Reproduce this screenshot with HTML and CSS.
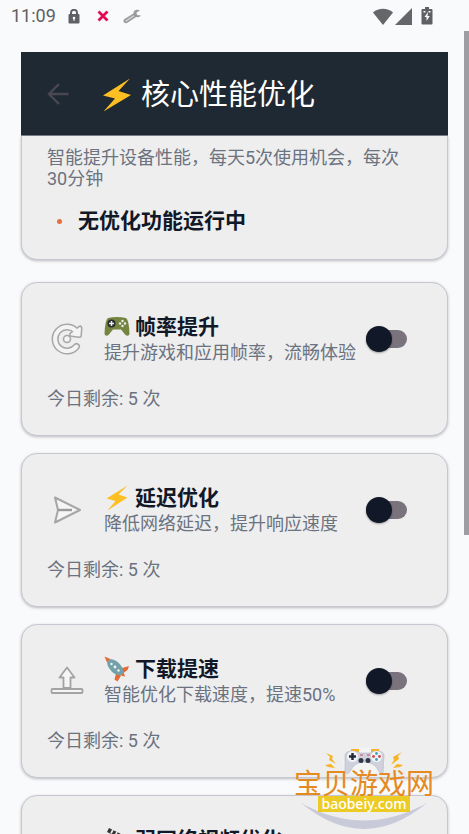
FILE: index.html
```html
<!DOCTYPE html>
<html lang="zh-CN">
<head>
<meta charset="utf-8">
<meta name="viewport" content="width=device-width, initial-scale=1">
<title>核心性能优化</title>
<link rel="stylesheet" href="styles.css">
</head>
<body>
<svg class="defs" aria-hidden="true">
  <symbol id="bolt" viewBox="0 0 28 34"><path d="M27 .5 0 17.500l12 3L.5 33.500 28 17l-12.500-4z" fill="#fdbf22"/></symbol>
</svg>
<div class="screen">
  <div class="status-bar">
    <time class="clock">11:09</time>
    <svg class="status-lock" width="12" height="15" viewBox="0 0 12 15"><path d="M3 6V3.800a3 3 0 0 1 6 0V6" fill="none" stroke="#5f6063" stroke-width="2"/><rect x=".5" y="5" width="11" height="9.500" rx="1" fill="#5f6063"/><circle cx="6" cy="9" r="1.300" fill="#f9fafc"/><path d="M6 9v3" stroke="#f9fafc"/></svg>
    <svg class="status-x" width="12" height="12" viewBox="0 0 12 12"><path d="m1.500 1.500 9 9M10.500 1.500l-9 9" stroke="#e00b50" stroke-width="2.800"/></svg>
    <svg class="status-tool" width="19" height="15" viewBox="0 0 19 15"><path d="m2.800 12 8-5.200" stroke="#9b9b9b" stroke-width="4.500" stroke-linecap="round"/><path d="M17 1.500c-3-1.500-7-.5-6.500 4C12 9 16 9 18 6.500l-4-.5-.5-2.500z" fill="#9b9b9b"/><path d="m3 12 7.500-5" stroke="#d9d9da" stroke-width="1.300" stroke-linecap="round"/></svg>
    <span class="signals">
      <svg width="20" height="17" viewBox="0 0 20 17"><path d="M0 4.500C5.500-.5 14.500-.5 20 4.500L10 17z" fill="#656669"/></svg>
      <svg width="17" height="17" viewBox="0 0 17 17"><path d="M17 0v17H0z" fill="#656669"/></svg>
      <svg class="battery" width="12" height="18" viewBox="0 0 12 18"><path d="M4 0h4v2h2.500Q11.500 2 11.500 3v13.500q0 1-1 1h-9q-1 0-1-1V3q0-1 1-1H4z" fill="#5f6063"/><path d="M2.500 4h2v1.500h-2zM7.500 4h2v1.500h-2zM7 5 3.500 10h2v4L8.800 9H6.500z" fill="#f9fafc"/></svg>
    </span>
  </div>

  <header class="app-header">
    <button class="back" type="button" aria-label="返回"><svg width="22" height="22" viewBox="0 0 22 22"><path d="M21.500 11H2M12 1 2 11l10 10" fill="none" stroke="#494852" stroke-width="2.400"/></svg></button>
    <svg class="header-bolt" width="28" height="34"><use href="#bolt"/></svg>
    <h1>核心性能优化</h1>
  </header>

  <main>
    <section class="card summary">
      <p class="note">智能提升设备性能，每天5次使用机会，每次30分钟</p>
      <p class="state"><span class="dot"></span>无优化功能运行中</p>
    </section>

    <div class="features">
      <section class="card">
        <div class="row">
          <svg class="feature-icon" width="40" height="40" viewBox="0 0 40 40"><g fill="none" stroke="#a6a6a6" stroke-width="7"><path d="M28.500 11.500A12 12 0 1 0 29.500 27.500" stroke-linecap="round"/><path d="m33 9-.5 7.500-8-1z" stroke-width="5" stroke-linejoin="round"/></g><g fill="#f4f4f4" stroke="#f4f4f4"><path d="M28.500 11.500A12 12 0 1 0 29.500 27.500" fill="none" stroke-width="4" stroke-linecap="round"/><path d="m33 9-.5 7.500-8-1z" stroke-width="2" stroke-linejoin="round"/></g><circle cx="20" cy="20" r="3.500" fill="#f4f4f4" stroke="#a6a6a6" stroke-width="1.600"/></svg>
          <div class="text">
            <h2><svg class="emoji" width="26" height="26" viewBox="0 0 26 26"><path d="M4 4q9-2 18 0Q25 6 25.500 20q-1 3-4 1L17 15.500H9L4.500 21q-3 2-4-1Q1 6 4 4z" fill="#75843f"/><circle cx="7.500" cy="9.500" r="4" fill="#272b2d"/><path d="M7.500 7v5M5 9.500h5" stroke="#eee" stroke-width="1.500"/><g fill="#eee"><circle cx="18.500" cy="7" r="1.200"/><circle cx="18.500" cy="12" r="1.200"/><circle cx="16" cy="9.500" r="1.200"/><circle cx="21" cy="9.500" r="1.200"/></g></svg><label for="fps">帧率提升</label></h2>
            <p>提升游戏和应用帧率，流畅体验</p>
          </div>
          <input class="switch" id="fps" type="checkbox" role="switch">
        </div>
        <p class="left">今日剩余: 5 次</p>
      </section>

      <section class="card">
        <div class="row">
          <svg class="feature-icon" width="40" height="40" viewBox="0 0 40 40"><path d="m8 7.500 25 12.500-25 12.500 3-12.500z" fill="#f5f5f5" stroke="#a6a6a6" stroke-width="2" stroke-linejoin="round"/><path d="M11 20h14" stroke="#999" stroke-width="2.400"/></svg>
          <div class="text">
            <h2><svg class="emoji" width="26" height="26" viewBox="0 0 26 26"><path d="M23.500.5 2.500 13.500l9 2.500-8 9.500 20-13-9-3z" fill="#fdbf22"/></svg><label for="latency">延迟优化</label></h2>
            <p>降低网络延迟，提升响应速度</p>
          </div>
          <input class="switch" id="latency" type="checkbox" role="switch">
        </div>
        <p class="left">今日剩余: 5 次</p>
      </section>

      <section class="card">
        <div class="row">
          <svg class="feature-icon" width="40" height="40" viewBox="0 0 40 40"><g fill="#f5f5f5" stroke="#a3a3a3" stroke-width="1.800" stroke-linejoin="round"><path d="m20 6.500 7.500 10H23.500V27h-7V16.500H12.500z"/><rect x="4.500" y="28" width="31" height="4" rx="1"/></g></svg>
          <div class="text">
            <h2><svg class="emoji" width="26" height="26" viewBox="0 0 26 26"><path d="M.5.500 6.500 3 3 6.500zM16.500 12.500l8.500-2.500-1.500 4-4 3zM12 17.500 10.500 23.500l3 2 4-6.500zM16 19.500l3.500-3.500 1.500 4.500z" fill="#e66a35"/><path d="M3 6.500 6.500 3C13 4 19 9.500 19.500 16.500L16.500 19.500C9.500 19 4 13 3 6.500z" fill="#73a1aa"/><g fill="#f0f3f3"><circle cx="7.500" cy="8" r="1.200"/><circle cx="11" cy="11" r="1.400"/><circle cx="14.500" cy="14.500" r="1.200"/></g></svg><label for="download">下载提速</label></h2>
            <p>智能优化下载速度，提速50%</p>
          </div>
          <input class="switch" id="download" type="checkbox" role="switch">
        </div>
        <p class="left">今日剩余: 5 次</p>
      </section>

      <section class="card">
        <div class="row">
          <svg class="feature-icon" width="40" height="40" viewBox="0 0 40 40"><path d="M11 9v24l21-12z" fill="#f5f5f5" stroke="#a6a6a6" stroke-width="1.500"/></svg>
          <div class="text">
            <h2><svg class="emoji" width="26" height="26" viewBox="0 0 26 26"><path d="m5 1 16 8-1.500 4L3 5z" fill="#303234"/><path d="m9 2.500-2 4m6-1.500-2 4m6-2-2 4" stroke="#e9e9e9" stroke-width="1.700"/><path d="M2 11h21v14H2z" fill="#303234"/></svg><label for="video">弱网络视频优化</label></h2>
            <p>智能缓冲，流畅播放视频</p>
          </div>
          <input class="switch" id="video" type="checkbox" role="switch">
        </div>
        <p class="left">今日剩余: 5 次</p>
      </section>
    </div>
  </main>

  <div class="scrollbar"></div>

  <aside class="watermark">
    <svg class="pad" width="78" height="28" viewBox="0 0 78 28"><ellipse cx="39" cy="14" rx="21" ry="14" fill="#f4f4f4"/><g fill="#f6b425"><path d="m1 5 7 3-1 3 4 5-7-4 1-3zM0 17l6-1 4 4-7-1zM77 4l-9 5 1 3-3 5 8-6-1-3zM78 17l-6-1-4 4 7-1z"/><path d="M26 1h8v3h-8zM46 1h8v3h-8z"/></g><path d="M20 7q1-4 8-4 5 0 7 2h10q2-2 7-2 6 0 7 4l-1 18q-2 2-5-3-4-8-14-8-9 0-13 8-3 5-6 3z" fill="#d0d1dc" stroke="#b4b6c6" stroke-width=".6"/><circle cx="27.500" cy="8.500" r="5.500" fill="#f2f3f7"/><circle cx="51.500" cy="8.500" r="5.500" fill="#f2f3f7"/><path d="M27.500 5v7M24 8.500h7" stroke="#232b3b" stroke-width="2.500"/><circle cx="51.500" cy="5.500" r="1.400" fill="#39a7b7"/><circle cx="51.500" cy="11.500" r="1.400" fill="#39a7b7"/><circle cx="48.500" cy="8.500" r="1.400" fill="#d64452"/><circle cx="54.500" cy="8.500" r="1.400" fill="#d64452"/><circle cx="36" cy="12.500" r="2.500" fill="#30394a"/><circle cx="43" cy="12.500" r="2.500" fill="#30394a"/><path d="M35 7h3m4 0h3" stroke="#d64452"/></svg>
    <span class="brand">宝贝游戏网</span>
    <span class="domain">baobeiy.com</span>
    <svg class="smile" width="126" height="26" viewBox="0 0 126 26"><path d="M0 0q63 35 126 0Q94 26 63 26T0 0z" fill="#c8cad9"/></svg>
  </aside>
</div>
</body>
</html>
```
FILE: styles.css
```css
* { box-sizing: border-box; }

body {
  margin: 0;
  background: #f9fafc;
  color: #111827;
  font-family: Roboto, "Noto Sans CJK SC", sans-serif;
}

h1, h2, p { margin: 0; }
svg { display: block; flex: none; }

.defs { position: absolute; width: 0; height: 0; }

.screen {
  position: relative;
  height: 100vh;
  overflow: hidden;
}

.status-bar {
  display: flex;
  align-items: center;
  height: 32px;
  padding: 0 36px 0 11px;
}
.clock {
  color: #5f6063;
  font-size: 18px;
  line-height: 32px;
}
.status-lock { margin-left: 12px; }
.status-x { margin-left: 17px; }
.status-tool { margin-left: 14px; }
.signals {
  display: flex;
  align-items: center;
  gap: 2px;
  margin-left: auto;
}
.signals :first-child { margin-left: 2px; }
.signals .battery { margin-left: 7px; }

.app-header {
  display: flex;
  align-items: center;
  height: 84px;
  margin: 20px 21px 0;
  padding-left: 26px;
  background: #1f2933;
  border-bottom: 1px solid #7d8189;
  color: #fff;
}
.back {
  padding: 0;
  border: 0;
  background: none;
}
.header-bolt { margin: 2px 10px 0 34px; }
.app-header h1 {
  padding-top: 3px;
  font-size: 29px;
  font-weight: 400;
  line-height: 40px;
}

main { padding: 0 21px; }

.card {
  padding: 25px;
  background: #eee;
  border: 1px solid #c8c6d0;
  border-radius: 16px;
  box-shadow: 0 1px 3px rgba(0, 0, 0, 0.25);
}

.summary {
  padding-top: 11px;
  padding-bottom: 24px;
  border-top: 0;
  border-radius: 0 0 16px 16px;
}
.note, .text p, .left {
  color: #6b7280;
  font-size: 18px;
}
.note {
  padding-right: 12px;
  line-height: 21px;
}
.state {
  display: flex;
  align-items: center;
  gap: 16px;
  margin-top: 18px;
  padding-left: 10px;
  font-size: 21px;
  font-weight: 700;
  line-height: 28px;
}
.dot {
  width: 5px;
  height: 5px;
  border-radius: 50%;
  background: #e4703a;
}

.features {
  display: grid;
  gap: 17px;
  margin-top: 22px;
}

.row {
  display: flex;
  align-items: center;
  height: 62px;
}
.text {
  flex: 1;
  margin-left: 17px;
  white-space: nowrap;
}
.text h2 {
  display: flex;
  align-items: center;
  gap: 5px;
  font-size: 21px;
  font-weight: 700;
  line-height: 28px;
}
.text p { line-height: 24px; }
.left {
  margin-top: 18px;
  line-height: 22px;
}

.switch {
  appearance: none;
  display: flex;
  flex: none;
  align-items: center;
  width: 41px;
  height: 18px;
  margin: 0 15px 0 0;
  border-radius: 9px;
  background: #7a737e;
}
.switch::before {
  content: "";
  width: 26px;
  height: 26px;
  border-radius: 50%;
  background: #111827;
  box-shadow: 0 1px 2px rgba(0, 0, 0, 0.35);
}
.switch:checked { justify-content: flex-end; }

.scrollbar {
  position: absolute;
  top: 31px;
  right: 0;
  width: 5px;
  height: 504px;
  background: #9e9da3;
}

.watermark {
  position: absolute;
  right: 34px;
  bottom: 5px;
  display: flex;
  flex-direction: column;
  align-items: center;
  width: 142px;
}
.brand {
  margin-top: -2px;
  color: #e58a20;
  font-size: 28px;
  font-weight: 400;
  line-height: 22px;
}
.domain {
  z-index: 1;
  padding: 0 3px;
  background: #eccb24;
  color: #fff;
  font-family: "Noto Sans", sans-serif;
  font-size: 14px;
  font-weight: 500;
  line-height: 16px;
}
.smile { margin-top: -9px; }
```
